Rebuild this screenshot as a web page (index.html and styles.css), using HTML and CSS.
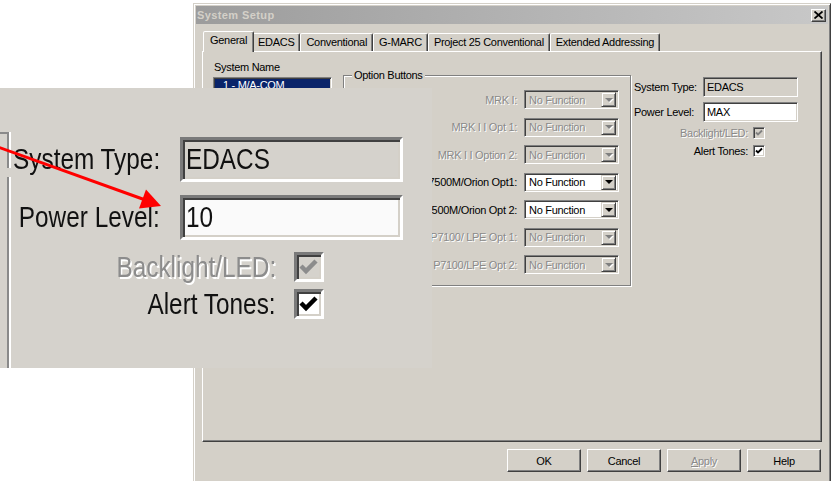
FILE: index.html
```html
<!DOCTYPE html>
<html lang="en">
<head>
<meta charset="utf-8">
<title>System Setup</title>
<link rel="stylesheet" href="styles.css">
</head>
<body>
  <div class="window">
    <div class="titlebar">
      <span class="title">System Setup</span>
      <span class="close">
        <svg width="9" height="8" viewBox="0 0 9 8"><path d="M0.5 0.5 L8.5 7.5 M8.5 0.5 L0.5 7.5" stroke="#000" stroke-width="1.8"/></svg>
      </span>
    </div>

    <div class="tabs">
      <div class="tab active">General</div>
      <div class="tab">EDACS</div>
      <div class="tab">Conventional</div>
      <div class="tab">G-MARC</div>
      <div class="tab">Project 25 Conventional</div>
      <div class="tab">Extended Addressing</div>
    </div>

    <div class="panel">
      <div class="namecol">
        <div class="lbl">System Name</div>
        <div class="listbox">
          <div class="item">1 - M/A-COM</div>
        </div>
      </div>

      <fieldset class="group">
        <legend>Option Buttons</legend>
        <div class="opts">
          <label class="dis">MRK I:</label>
          <div class="combo dis"><span>No Function</span><i class="drop"></i></div>
          <label class="dis">MRK I I Opt 1:</label>
          <div class="combo dis"><span>No Function</span><i class="drop"></i></div>
          <label class="dis">MRK I I Option 2:</label>
          <div class="combo dis"><span>No Function</span><i class="drop"></i></div>
          <label>M7500M/Orion Opt1:</label>
          <div class="combo"><span>No Function</span><i class="drop"></i></div>
          <label>M7500M/Orion Opt 2:</label>
          <div class="combo"><span>No Function</span><i class="drop"></i></div>
          <label class="dis">P7100/ LPE Opt 1:</label>
          <div class="combo dis"><span>No Function</span><i class="drop"></i></div>
          <label class="dis">P7100/LPE Opt 2:</label>
          <div class="combo dis"><span>No Function</span><i class="drop"></i></div>
        </div>
      </fieldset>

      <div class="syscol">
        <div class="frow"><label>System Type:</label><div class="field ro">EDACS</div></div>
        <div class="frow"><label>Power Level:</label><div class="field">MAX</div></div>
        <div class="crow first">
          <label class="dis">Backlight/LED:</label>
          <span class="chk dis"><svg width="8" height="8" viewBox="0 0 8 8"><path d="M1 3.5 L3 5.5 L7 1.5" fill="none" stroke="#808080" stroke-width="1.8"/></svg></span>
        </div>
        <div class="crow">
          <label>Alert Tones:</label>
          <span class="chk"><svg width="8" height="8" viewBox="0 0 8 8"><path d="M1 3.5 L3 5.5 L7 1.5" fill="none" stroke="#000" stroke-width="1.8"/></svg></span>
        </div>
      </div>
    </div>

    <div class="buttons">
      <button class="btn">OK</button>
      <button class="btn">Cancel</button>
      <button class="btn dis"><u>A</u>pply</button>
      <button class="btn">Help</button>
    </div>
  </div>

  <!-- zoomed-in view of the System Type / Power Level area -->
  <div class="magnifier">
    <span class="edge edge-h"></span>
    <span class="edge edge-v1"></span>
    <span class="edge edge-v2"></span>

    <div class="mag-fields">
      <label><span class="sq">System Type:</span></label>
      <div class="mag-field ro"><span class="sq left">EDACS</span></div>
      <label><span class="sq">Power Level:</span></label>
      <div class="mag-field"><span class="sq left">10</span></div>
    </div>
    <div class="mag-check first">
      <label class="dis"><span class="sq">Backlight/LED:</span></label>
      <span class="mag-box dis"><svg width="24" height="24" viewBox="0 0 24 24"><path d="M4 11 L9 16 L19 6" fill="none" stroke="#8c8c8c" stroke-width="4.5"/></svg></span>
    </div>
    <div class="mag-check">
      <label><span class="sq">Alert Tones:</span></label>
      <span class="mag-box"><svg width="24" height="24" viewBox="0 0 24 24"><path d="M4 11 L9 16 L19 6" fill="none" stroke="#000" stroke-width="4.5"/></svg></span>
    </div>
  </div>

  <svg class="arrow" width="833" height="481" viewBox="0 0 833 481">
    <line x1="-2" y1="147" x2="144" y2="199.5" stroke="#ff0000" stroke-width="3"/>
    <polygon points="161,206 146,189.5 139,208.5" fill="#ff0000"/>
  </svg>
</body>
</html>
```

FILE: styles.css
```css
* {
  box-sizing: border-box;
}

html,
body {
  margin: 0;
  padding: 0;
}

body {
  position: relative;
  width: 833px;
  height: 481px;
  overflow: hidden;
  background: #fff;
  color: #000;
  font-family: "Liberation Sans", Arial, sans-serif;
  font-size: 11px;
  letter-spacing: -0.3px;
}

/* ---------- dialog window ---------- */
.window {
  position: absolute;
  z-index: 0;
  left: 193px;
  top: 3px;
  width: 638px;
  height: 492px;
  display: flex;
  flex-direction: column;
  padding: 2px;
  background: #d4d0c8;
  border: 1px solid;
  border-color: #d4d0c8 #404040 #404040 #d4d0c8;
  box-shadow: inset 1px 1px 0 #fff, inset -1px -1px 0 #808080;
}

.titlebar {
  height: 18px;
  display: flex;
  align-items: center;
  justify-content: space-between;
  padding: 0 2px 0 1px;
  background: linear-gradient(to right, #9c9c9c, #c8c8c8);
}

.title {
  color: #d4d0c8;
  font-weight: bold;
  letter-spacing: 0.4px;
}

.close {
  width: 15px;
  height: 13px;
  display: flex;
  align-items: center;
  justify-content: center;
  background: #d4d0c8;
  border: 1px solid;
  border-color: #fff #404040 #404040 #fff;
  box-shadow: inset -1px -1px 0 #808080;
}

/* ---------- tab strip ---------- */
.tabs {
  display: flex;
  align-items: flex-start;
  height: 20px;
  margin: 7px 0 0 6px;
  padding-left: 3px;
}

.tab {
  height: 18px;
  margin-top: 2px;
  padding: 1px 5px 0;
  line-height: 14px;
  white-space: nowrap;
  background: #d4d0c8;
  border: 1px solid;
  border-bottom: 0;
  border-color: #fff #404040 transparent #fff;
  border-radius: 2px 2px 0 0;
  box-shadow: inset -1px 0 0 #808080;
}

.tab.active {
  position: relative;
  z-index: 2;
  height: 21px;
  margin: 0 -2px;
  padding: 1px 6px 0;
}

.panel {
  position: relative;
  z-index: 1;
  width: 620px;
  height: 391px;
  margin-left: 6px;
  display: flex;
  align-items: flex-start;
  padding: 9px 0 0 10px;
  border: 1px solid;
  border-color: #fff #404040 #404040 #fff;
  box-shadow: inset -1px -1px 0 #808080;
}

/* ---------- shared 3D looks ---------- */
.listbox,
.combo,
.field,
.chk {
  border: 1px solid;
  border-color: #808080 #fff #fff #808080;
  box-shadow: inset 1px 1px 0 #404040, inset -1px -1px 0 #d4d0c8;
}

.dis {
  color: #8a8a8a;
  text-shadow: 1px 1px 0 #fff;
}

/* ---------- system name list ---------- */
.namecol {
  width: 119px;
  display: flex;
  flex-direction: column;
}

.namecol .lbl {
  line-height: 13px;
  padding-left: 1px;
}

.listbox {
  height: 210px;
  margin-top: 3px;
  padding: 1px;
  background: #fff;
}

.listbox .item {
  line-height: 13px;
  padding-left: 8px;
  color: #fff;
  background: #0a246a;
}

/* ---------- option buttons group ---------- */
.group {
  width: 288px;
  min-width: 0;
  margin: 8px 0 0 11px;
  padding: 8px 11px 11px 0;
  border: 1px solid #808080;
  box-shadow: inset 1px 1px 0 #fff, 1px 1px 0 #fff;
}

.group legend {
  margin-left: 8px;
  padding: 0 2px;
  line-height: 13px;
  background: #d4d0c8;
}

.opts {
  display: grid;
  grid-template-columns: 173px 95px;
  column-gap: 7px;
  grid-auto-rows: 19px;
  row-gap: 8.5px;
  align-items: center;
}

.opts label {
  text-align: right;
  white-space: nowrap;
}

.combo {
  height: 19px;
  display: flex;
  align-items: center;
  padding: 2px 2px 2px 4px;
  background: #fff;
}

.combo span {
  flex: 1;
  white-space: nowrap;
}

.combo.dis {
  background: #d4d0c8;
}

.drop {
  width: 15px;
  height: 15px;
  display: flex;
  align-items: center;
  justify-content: center;
  background: #d4d0c8;
  border: 1px solid;
  border-color: #d4d0c8 #404040 #404040 #d4d0c8;
  box-shadow: inset 1px 1px 0 #fff, inset -1px -1px 0 #808080;
}

.drop::before {
  content: "";
  border-left: 4px solid transparent;
  border-right: 4px solid transparent;
  border-top: 4px solid #000;
}

.combo.dis .drop::before {
  border-top-color: #808080;
  filter: drop-shadow(1px 1px 0 #fff);
}

/* ---------- system type column ---------- */
.syscol {
  width: 165px;
  margin: 16px 0 0 2px;
  display: flex;
  flex-direction: column;
}

.frow {
  height: 20px;
  display: flex;
  align-items: center;
}

.frow + .frow {
  margin-top: 5px;
}

.frow label {
  width: 70px;
  padding-left: 1px;
  white-space: nowrap;
}

.field {
  width: 95px;
  height: 20px;
  padding-left: 3px;
  line-height: 18px;
  background: #fff;
}

.field.ro {
  background: #d4d0c8;
}

.crow {
  height: 12px;
  margin-top: 6px;
  display: flex;
  align-items: center;
  justify-content: flex-end;
  gap: 5px;
  padding-right: 33px;
}

.crow.first {
  margin-top: 5px;
}

.chk {
  width: 12px;
  height: 12px;
  display: flex;
  align-items: center;
  justify-content: center;
  background: #fff;
}

.chk.dis {
  background: #d4d0c8;
}

/* ---------- dialog buttons ---------- */
.buttons {
  display: flex;
  justify-content: flex-end;
  gap: 6px;
  margin: 7px 7px 0 0;
}

.btn {
  width: 74px;
  height: 23px;
  padding: 0;
  font: inherit;
  letter-spacing: inherit;
  color: #000;
  background: #d4d0c8;
  border: 1px solid;
  border-color: #fff #404040 #404040 #fff;
  box-shadow: inset -1px -1px 0 #808080;
}

.btn.dis {
  color: #8a8a8a;
  text-shadow: 1px 1px 0 #fff;
}

/* ---------- magnified inset ---------- */
.magnifier {
  position: absolute;
  z-index: 1;
  left: 0;
  top: 88px;
  width: 432px;
  height: 280px;
  overflow: hidden;
  padding-top: 49px;
  background: #d5d2cc;
  color: #111;
  font-family: "Liberation Sans", Arial, sans-serif;
  font-size: 29px;
  letter-spacing: 0;
}

/* the zoomed font is narrower than the regular face */
.sq {
  display: inline-block;
  flex: none;
  transform: scaleX(0.84);
  transform-origin: right center;
}

.sq.left {
  transform-origin: left center;
}

.edge {
  position: absolute;
  background: #8a8a8a;
}

.edge-h {
  left: 0;
  top: 44px;
  width: 9px;
  height: 2px;
}

.edge-v1 {
  left: 7px;
  top: 44px;
  width: 2px;
  height: 36px;
  box-shadow: 2px 0 0 #fff;
}

.edge-v2 {
  left: 7px;
  top: 89px;
  width: 2px;
  height: 200px;
  box-shadow: 2px 0 0 #fff;
}

.mag-fields {
  display: grid;
  grid-template-columns: 160px 223px;
  column-gap: 20px;
  grid-auto-rows: 45px;
  row-gap: 13px;
  align-items: center;
}

.mag-fields label {
  display: flex;
  justify-content: flex-end;
  white-space: nowrap;
}

.mag-field {
  height: 45px;
  padding-left: 3px;
  line-height: 39px;
  background: #fafafa;
  border: 3px solid;
  border-color: #7a7a7a #fff #fff #7a7a7a;
  box-shadow: inset 2px 2px 0 #404040, inset -2px -2px 0 #d4d0c8;
}

.mag-field.ro {
  background: #d5d2cc;
}

.mag-check {
  width: 324px;
  height: 30px;
  margin-top: 7px;
  display: flex;
  align-items: center;
  justify-content: flex-end;
  gap: 18px;
}

.mag-check.first {
  margin-top: 12px;
}

.mag-check label {
  white-space: nowrap;
}

.mag-check label.dis {
  color: #8c8c8c;
  text-shadow: 2px 2px 0 #fff;
}

.mag-box {
  width: 30px;
  height: 30px;
  display: flex;
  align-items: center;
  justify-content: center;
  background: #fff;
  border: 3px solid;
  border-color: #7a7a7a #fff #fff #7a7a7a;
  box-shadow: inset 2px 2px 0 #404040, inset -2px -2px 0 #d4d0c8;
}

.mag-box.dis {
  background: #d5d2cc;
}

/* ---------- pointer arrow ---------- */
.arrow {
  position: absolute;
  z-index: 2;
  left: 0;
  top: 0;
  pointer-events: none;
}
```
